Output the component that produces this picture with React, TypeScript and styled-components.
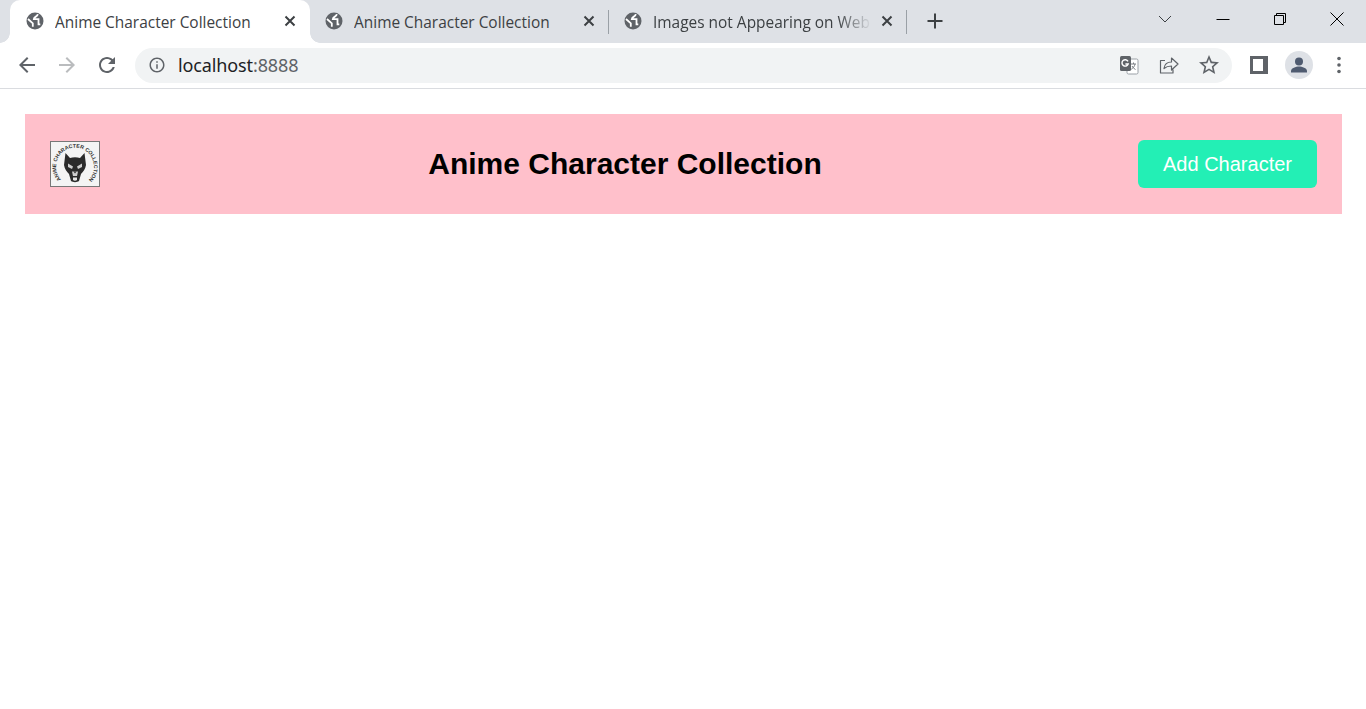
import styled, { createGlobalStyle, css } from "styled-components";

const GlobalStyle = createGlobalStyle`
  html, body {
    margin: 0;
    padding: 0;
    background: #ffffff;
  }
  * {
    box-sizing: border-box;
  }
`;

const Browser = styled.div`
  display: flex;
  flex-direction: column;
  min-height: 709px;
`;

const TabStrip = styled.div`
  display: flex;
  height: 43px;
  padding-left: 10px;
  background: #dee1e6;
`;

const activeTab = css`
  padding-left: 16px;
  background: #ffffff;

  &::before,
  &::after {
    content: "";
    position: absolute;
    bottom: 0;
    width: 10px;
    height: 10px;
  }
  &::before {
    left: -10px;
    background: radial-gradient(circle at 0 0, transparent 9.5px, #ffffff 10px);
  }
  &::after {
    right: -10px;
    background: radial-gradient(circle at 100% 0, transparent 9.5px, #ffffff 10px);
  }
`;

const inactiveTab = css`
  &::after {
    content: "";
    position: absolute;
    right: 0;
    top: 10px;
    width: 1px;
    height: 24px;
    background: #9aa0a6;
  }
`;

const Tab = styled.div<{ $active?: boolean; $width: number }>`
  position: relative;
  display: flex;
  align-items: center;
  width: ${(props) => props.$width}px;
  padding: 0 13px 0 15px;
  border-radius: 10px 10px 0 0;
  ${(props) => (props.$active ? activeTab : inactiveTab)}
`;

const Favicon = styled.svg`
  flex: none;
  width: 18px;
  height: 18px;
  margin-top: -2px;
`;

const TabTitle = styled.span<{ $fade?: boolean }>`
  flex: 1;
  margin-left: 11px;
  overflow: hidden;
  white-space: nowrap;
  font-family: "Open Sans", "Noto Sans", sans-serif;
  font-size: 15.45px;
  color: #3c4043;
  mask-image: ${(props) =>
    props.$fade ? "linear-gradient(to right, #000 84%, transparent 100%)" : "none"};
`;

const TabClose = styled.svg`
  flex: none;
  width: 14px;
  height: 14px;
  margin: -2px 0 0 8px;
`;

const NewTab = styled.svg`
  flex: none;
  width: 18px;
  height: 18px;
  margin: 12px 0 0 19px;
`;

const StripSpacer = styled.div`
  flex: 1;
`;

const WindowControls = styled.div`
  display: flex;
  height: 37px;
`;

const WindowButton = styled.div<{ $wide?: boolean }>`
  display: flex;
  align-items: center;
  justify-content: center;
  width: ${(props) => (props.$wide ? "58px" : "57px")};
`;

const TabSearch = styled.div`
  display: flex;
  align-items: center;
  justify-content: center;
  width: 28px;
  height: 37px;
  margin-right: 15px;
`;

const Toolbar = styled.div`
  display: flex;
  align-items: center;
  height: 46px;
  padding-left: 7px;
  background: #ffffff;
  border-bottom: 1px solid #dadce0;
`;

const NavButton = styled.div`
  display: flex;
  align-items: center;
  justify-content: center;
  flex: none;
  width: 40px;
  height: 40px;
  margin-top: -1px;
`;

const Omnibox = styled.div`
  display: flex;
  align-items: center;
  width: 1097px;
  height: 35px;
  margin: -1px 7px 0 8px;
  padding: 0 3px 0 13px;
  border-radius: 18px;
  background: #f1f3f4;
`;

const Address = styled.div`
  flex: 1;
  margin-left: 12px;
  font-family: "Noto Sans", "Open Sans", sans-serif;
  font-size: 18px;
  letter-spacing: -0.12px;
  color: #202124;

  span {
    color: #5f6368;
  }
`;

const Page = styled.main`
  padding: 25px 24px 0 25px;
`;

const Header = styled.header`
  display: flex;
  align-items: center;
  justify-content: space-between;
  height: 100px;
  padding: 0 25px;
  background: #ffc0cb;
`;

const Logo = styled.svg`
  flex: none;
  width: 50px;
  height: 46px;
  margin-right: 12px;
`;

const Title = styled.h1`
  margin: 0;
  font-family: "Liberation Sans", Arial, sans-serif;
  font-size: 30px;
  font-weight: 700;
  color: #000000;
`;

const AddButton = styled.button`
  width: 179px;
  height: 48px;
  border: none;
  border-radius: 6px;
  background: #23efb5;
  font-family: "Liberation Sans", Arial, sans-serif;
  font-size: 20px;
  color: #ffffff;
  cursor: pointer;
`;

const GlobeIcon = () => (
  <Favicon viewBox="0 0 18 18">
    <circle cx="9" cy="9" r="8.5" fill="#5f6368" />
    <path
      d="M2 7 6.800 11.300V14.800M11.800 2.200C11.500 5 8 4.300 7.800 7.200H12.500V12.300H14.300"
      stroke="#ffffff"
      strokeWidth="1.800"
      fill="none"
    />
  </Favicon>
);

const CloseIcon = () => (
  <TabClose viewBox="0 0 14 14">
    <path d="M2.500 2.500 11.500 11.500M11.500 2.500 2.500 11.500" stroke="#3c4043" strokeWidth="2" fill="none" />
  </TabClose>
);

const App = () => {
  return (
    <>
      <GlobalStyle />
      <Browser>
        <TabStrip>
          <Tab $active $width={300}>
            <GlobeIcon />
            <TabTitle>Anime Character Collection</TabTitle>
            <CloseIcon />
          </Tab>
          <Tab $width={299}>
            <GlobeIcon />
            <TabTitle>Anime Character Collection</TabTitle>
            <CloseIcon />
          </Tab>
          <Tab $width={298}>
            <GlobeIcon />
            <TabTitle $fade>Images not Appearing on Web</TabTitle>
            <CloseIcon />
          </Tab>
          <NewTab viewBox="0 0 18 18">
            <path d="M9 1.500V16.500M1.500 9H16.500" stroke="#3c4043" strokeWidth="2" fill="none" />
          </NewTab>
          <StripSpacer />
          <TabSearch>
            <svg width="14" height="8" viewBox="0 0 14 8">
              <path d="M1 1 7 7 13 1" stroke="#3c4043" strokeWidth="1" fill="none" />
            </svg>
          </TabSearch>
          <WindowControls>
            <WindowButton>
              <svg width="14" height="14" viewBox="0 0 14 14">
                <path d="M0.500 7.500H13.500" stroke="#000" strokeWidth="1" fill="none" />
              </svg>
            </WindowButton>
            <WindowButton>
              <svg width="14" height="14" viewBox="0 0 14 14">
                <path
                  d="M1.500 3.500H10.500V12.500H1.500ZM3.500 3.500V1.500H12.500V10.500H10.500"
                  stroke="#000"
                  strokeWidth="1"
                  fill="none"
                />
              </svg>
            </WindowButton>
            <WindowButton $wide>
              <svg width="14" height="14" viewBox="0 0 14 14">
                <path d="M0.500 0.500 13.500 13.500M13.500 0.500 0.500 13.500" stroke="#000" strokeWidth="1" fill="none" />
              </svg>
            </WindowButton>
          </WindowControls>
        </TabStrip>
        <Toolbar>
          <NavButton>
            <svg width="24" height="24" viewBox="0 0 24 24">
              <path d="M20 11H7.830l5.590-5.590L12 4l-8 8 8 8 1.410-1.410L7.830 13H20v-2z" fill="#5f6368" />
            </svg>
          </NavButton>
          <NavButton>
            <svg width="24" height="24" viewBox="0 0 24 24">
              <path d="M4 11h12.170l-5.590-5.590L12 4l8 8-8 8-1.410-1.410L16.170 13H4v-2z" fill="#babcbe" />
            </svg>
          </NavButton>
          <NavButton>
            <svg width="24" height="24" viewBox="0 0 24 24">
              <path
                d="M17.650 6.350C16.200 4.900 14.210 4 12 4c-4.420 0-7.990 3.580-7.990 8s3.570 8 7.990 8c3.730 0 6.840-2.550 7.730-6h-2.080c-.820 2.330-3.040 4-5.650 4-3.310 0-6-2.690-6-6s2.690-6 6-6c1.660 0 3.140.690 4.220 1.780L13 11h7V4l-2.350 2.350z"
                fill="#5f6368"
              />
            </svg>
          </NavButton>
          <Omnibox>
            <svg width="18" height="18" viewBox="0 0 24 24">
              <path
                d="M11 7h2v2h-2zm0 4h2v6h-2zm1-9C6.480 2 2 6.480 2 12s4.480 10 10 10 10-4.480 10-10S17.520 2 12 2zm0 18c-4.410 0-8-3.590-8-8s3.590-8 8-8 8 3.590 8 8-3.590 8-8 8z"
                fill="#5f6368"
              />
            </svg>
            <Address>
              localhost<span>:8888</span>
            </Address>
            <NavButton>
              <svg width="20" height="20" viewBox="0 0 20 20">
                <rect x="8" y="4" width="11" height="15" rx="1.500" fill="#ffffff" stroke="#9aa0a6" strokeWidth="1" />
                <path d="M12 9h5M14.500 7.500V9M16 9c-.4 2.500-2 4.300-3.800 5.300M13 11c.8 1.600 2 2.800 3.500 3.500" stroke="#7b7f84" strokeWidth="1" fill="none" />
                <rect x="1" y="1" width="11" height="15" rx="1.500" fill="#5f6368" />
                <path d="M9 6.400A3.200 3.200 0 1 0 9.200 9H6.400" stroke="#ffffff" strokeWidth="1.400" fill="none" />
              </svg>
            </NavButton>
            <NavButton>
              <svg width="20" height="20" viewBox="0 0 20 20">
                <path
                  d="M6 5.500H1.500V18H14V14.500M5 13.500C5.500 9.500 8.500 7 12.500 7V3l6.500 6-6.500 6v-4c-3 0-5.500 .7-7.500 2.500z"
                  stroke="#5f6368"
                  strokeWidth="1.200"
                  fill="none"
                  strokeLinejoin="round"
                />
              </svg>
            </NavButton>
            <NavButton>
              <svg width="24" height="24" viewBox="0 0 24 24">
                <path
                  d="M22 9.240l-7.190-.620L12 2 9.190 8.630 2 9.240l5.460 4.730L5.820 21 12 17.270 18.180 21l-1.630-7.030L22 9.240zM12 15.400l-3.760 2.270 1-4.280-3.320-2.880 4.380-.380L12 6.100l1.710 4.040 4.380.380-3.320 2.880 1 4.280L12 15.400z"
                  fill="#5f6368"
                />
              </svg>
            </NavButton>
          </Omnibox>
          <NavButton>
            <svg width="18" height="18" viewBox="0 0 18 18">
              <path d="M0 0H18V18H0ZM3 3V15H13V3Z" fill="#5f6368" fillRule="evenodd" />
            </svg>
          </NavButton>
          <NavButton>
            <svg width="28" height="28" viewBox="0 0 28 28">
              <circle cx="14" cy="14" r="14" fill="#dee1e6" />
              <circle cx="14" cy="10.500" r="4" fill="#4f5b70" />
              <path d="M6 20c0-3 5-4.500 8-4.500s8 1.500 8 4.500v1.500H6z" fill="#4f5b70" />
            </svg>
          </NavButton>
          <NavButton>
            <svg width="4" height="18" viewBox="0 0 4 18">
              <circle cx="2" cy="2.500" r="1.800" fill="#5f6368" />
              <circle cx="2" cy="9" r="1.800" fill="#5f6368" />
              <circle cx="2" cy="15.500" r="1.800" fill="#5f6368" />
            </svg>
          </NavButton>
        </Toolbar>
        <Page>
          <Header>
            <Logo viewBox="0 0 50 46">
              <rect x="0.500" y="0.500" width="49" height="45" fill="#f4f4f4" stroke="#777777" />
              <defs>
                <path id="logo-ring" d="M11 38.500A19 19 0 1 1 39 38.500" />
              </defs>
              <text fontFamily="Liberation Sans, sans-serif" fontSize="5.200" fontWeight="700" fill="#333333">
                <textPath href="#logo-ring" textLength="88" lengthAdjust="spacingAndGlyphs">
                  ANIME CHARACTER COLLECTION
                </textPath>
              </text>
              <path
                d="M15.500 12 20 17C23 16 27 16 30 17L34.500 12 36 24C35.500 28 33 31 31 33L29 40C27 41.500 23 41.500 21 40L19 33C17 31 14.500 28 14 24Z"
                fill="#2b2b2b"
              />
              <path d="M18 22.500 23 25.500 22 28 18 26ZM32 22.500 27 25.500 28 28 32 26Z" fill="#cfcfcf" />
              <path d="M22 30.500H28L27 35H23Z" fill="#cfcfcf" />
              <path d="M23.500 30.500H26.500L25 32.500Z" fill="#2b2b2b" />
              <path d="M23 36.500H27V39C26 40 24 40 23 39Z" fill="#e6e6e6" />
            </Logo>
            <Title>Anime Character Collection</Title>
            <AddButton>Add Character</AddButton>
          </Header>
        </Page>
      </Browser>
    </>
  );
};

export default App;
